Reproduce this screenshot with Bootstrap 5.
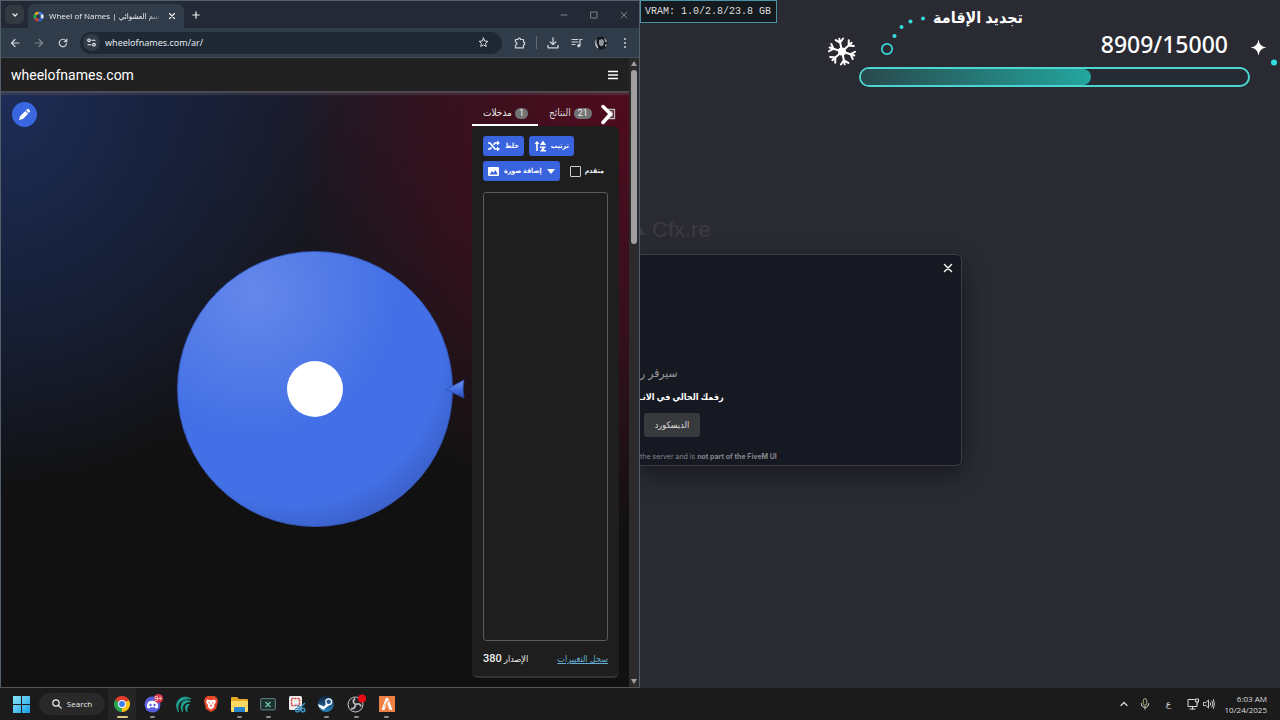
<!DOCTYPE html>
<html lang="ar">
<head>
<meta charset="utf-8">
<meta name="viewport" content="width=device-width, initial-scale=1">
<title>Wheel of Names</title>
<link href="https://cdn.jsdelivr.net/npm/bootstrap@5.3.0/dist/css/bootstrap.min.css" rel="stylesheet">
<style>
body{background:#1c1c1c;color:#eee;font-family:Roboto,"DejaVu Sans Condensed","DejaVu Sans",sans-serif;font-size:9px;line-height:12px}
svg{display:block;flex:none}
button{color:inherit}
.desktop{min-height:100vh}
.bare{background:none;border:0;padding:0}
.ln{fill:none;stroke:currentColor;stroke-linecap:round;stroke-linejoin:round}
/* browser window */
.browser{background:#232a36;border:1px solid #53606c;border-bottom-color:#555}
.strip{height:27px;padding-left:4px;font-family:"Open Sans","DejaVu Sans Condensed","DejaVu Sans",sans-serif}
.tablist-btn{width:19px;height:19px;border-radius:6px;background:#343a42}
.btab{width:156px;height:24px;background:#303c4a;border-radius:7px 7px 0 0;padding:0 8px 0 5px;gap:5px}
.tabtitle{font-size:8px;height:14px;line-height:14px;white-space:nowrap;-webkit-mask-image:linear-gradient(90deg,#000 85%,transparent);mask-image:linear-gradient(90deg,#000 85%,transparent)}
.wbtn{width:30px;height:24px;color:#7b828c}
.bar{height:30px;background:#303c4a;padding:0 2px;border-bottom:1px solid #444b55}
.tool{width:24px;height:24px;color:#c9d3de}
.omni{height:22px;border-radius:11px;background:#1d2834;margin:0 6px 0 5px;padding:0 9px 0 3px}
.site{width:17px;height:17px;border-radius:50%;background:#303c4a}
.omni input{background:none;border:0;outline:0;color:#e3e8ee;font:9px "Noto Sans",sans-serif;padding:0 0 0 5px;min-width:0}
.sitehead{height:33px;background:#212121;padding:0 11px 0 10px}
.sitehead a{font-size:14px;line-height:20px;color:#fff;text-decoration:none}
.stage{background:linear-gradient(#54505a,transparent 5px),radial-gradient(ellipse 330px 400px at 0 0,#1e2d57 0,rgba(24,38,72,.75) 45%,transparent),radial-gradient(ellipse 340px 440px at 100% 0,#500b1e 0,rgba(66,13,25,.7) 55%,transparent),linear-gradient(#1a1a28,#111 68%)}
.edit{width:25px;height:25px;left:11px;top:11px;background:#3a66e0}
.wheel{width:276px;height:276px;border:1px solid #3557b8;background:radial-gradient(circle at 28% 15%,#6487ea 0,#587fe8 18%,transparent 46%),radial-gradient(circle at 42% 38%,#4370e6 0,#4370e6 64%,#3759bd 82%)}
.hub{width:56px;height:56px;background:#fff}
.pointer{margin-left:-8px;margin-right:7px}
.side{width:147px;margin:11px 10px 9px 0}
.side .nav-link{color:#ddd;font-size:10px;line-height:14px;padding:4px 10px 4px 11px;border-bottom:2px solid transparent;border-radius:0;gap:3px}
.side .nav-link.active{border-color:#fff;color:#eee}
.pill{background:#737373;color:#eee;border-radius:6px;font-size:9px;line-height:11px;padding:0 4px}
.entries{background:#1e1e1e;border-bottom:2px solid #333;border-radius:6px;padding:10px 11px}
.acts{gap:5px;margin-bottom:5px}
.act{background:#3a63de;color:#fff;border:0;border-radius:3px;height:20px;font-size:7px;line-height:10px;font-weight:700;white-space:nowrap;padding:0 5px;gap:5px;display:flex;align-items:center}
.entries .form-check-input{width:11px;height:11px;margin:0 0 0 10px;border:1px solid #ccc;border-radius:1px;background:#1e1e1e}
.chk{font-size:7px;line-height:10px;font-weight:700;margin-left:4px}
.entries textarea{background:#1e1e1e;border:1px solid #5a5a5a;border-radius:3px;resize:none;outline:0;margin-top:11px;min-height:120px;color:#fff}
.foot{font-size:9px;line-height:14px;margin-top:11px}
.foot b{font-size:11px;font-weight:500}
.foot a{color:#64aed4}
.scrollcol{width:10px;background:#2b2b2c;padding:3px 0;color:#a0a0a0}
.thumb{width:6px;height:28%;background:#9f9f9f;border-radius:3px}
/* game window */
.game{background:#2a2a33;overflow:hidden}
.vram{border:1px solid #4c93a6;background:#151a1e;color:#ddd;font:10px/21px "Liberation Mono",monospace;padding:1px 5px 0 4px;line-height:20px;white-space:pre}
.goal{width:460px;padding:6px 30px 0 0}
.goal h2{font-size:16px;line-height:24px;font-weight:700;margin:0 227px 0 0;color:#fff}
.count{font-family:"Noto Sans",sans-serif;font-size:23px;font-weight:500;line-height:28px;margin:0 22px 9px 0;color:#fff}
.goal .progress{width:391px;height:20px;border:2px solid #4bd6d2;border-radius:10px;background:#262a33}
.goal .progress-bar{border-radius:0 9px 9px 0;background:linear-gradient(90deg,#29484c,#23a69e)}
.decor{right:0;top:0}
.ghost{font-family:"Liberation Sans",sans-serif;font-size:22px;line-height:28px;color:#3a3a41;margin:129px 0 10px;gap:6px}
.notice{width:50.3%;height:212px;background:#161822;border:1px solid #3b3e45;border-left:0;border-radius:0 6px 6px 0;box-shadow:0 8px 24px rgba(0,0,0,.45)}
.notice p{margin:0;white-space:nowrap}
.close-x{top:8px;right:8px;width:10px;height:10px}
.notice .l1{font-size:12px;line-height:16px;color:#999;margin-bottom:8px}
.l2{font-size:9px;line-height:16px;font-weight:700;color:#fff}
.dc{background:#38393c;color:#ddd;border-radius:3px;width:56px;height:24px;font-size:9px;margin:8px 4px 0}
.notice .l3{font-family:Inter,sans-serif;font-size:7px;line-height:10px;color:#85878c;margin:15px 0 3px}
/* taskbar */
.taskbar{height:32px;background:#1b1b1b;padding:0 13px;font-family:"Open Sans","DejaVu Sans",sans-serif}
.search{width:66px;height:22px;border-radius:11px;background:#292929;font-size:8px;margin:0 3px 0 9px;gap:5px}
.apps{width:293px}
.app{height:32px}
.app::after{content:"";position:absolute;bottom:2px;width:5px;height:2px;border-radius:1px;background:#8b8b8b}
.app.idle::after{display:none}
.app.on{background:#252525;border-radius:3px}
.app.on::after{width:11px;background:#d8c98a}
.tray{color:#ddd;gap:12px}
.clock{font-size:8px;line-height:11px;width:40px;white-space:nowrap}
</style>
</head>
<body>
<div class="desktop d-flex flex-column">
<div class="d-flex flex-grow-1">

<main class="browser w-50 d-flex flex-column" aria-label="Browser">
  <div class="strip d-flex align-items-center">
    <button class="bare tablist-btn d-flex align-items-center justify-content-center" aria-label="Tabs"><svg width="8" height="8" viewBox="0 0 8 8"><path class="ln" d="M2 3l2 2 2-2" stroke-width="1.3"/></svg></button>
    <div class="btab ms-1 d-flex align-items-center align-self-end">
      <svg width="11" height="11" viewBox="0 0 12 12" fill="none" stroke-width="3"><path d="M6 2A4 4 0 0 1 9.5 4" stroke="#3c7bea"/><path d="M9.5 4A4 4 0 0 1 9.500 8" stroke="#dfe6f2"/><path d="M9.500 8A4 4 0 0 1 6 10" stroke="#2864d8"/><path d="M6 10A4 4 0 0 1 2.500 8" stroke="#d93a35"/><path d="M2.500 8A4 4 0 0 1 2.500 4" stroke="#1fa656"/><path d="M2.500 4A4 4 0 0 1 6 2" stroke="#eda72f"/></svg>
      <div class="tabtitle flex-grow-1">Wheel of Names | <bdi>سم العشوائي</bdi></div>
      <button class="bare" aria-label="Close tab"><svg width="8" height="8" viewBox="0 0 8 8"><path class="ln" d="M1.500 1.500l5 5m0-5l-5 5" stroke-width="1.200"/></svg></button>
    </div>
    <button class="bare ms-2" aria-label="New tab"><svg width="8" height="8" viewBox="0 0 8 8"><path class="ln" d="M4 .8v6.400M.8 4h6.400" stroke-width="1.200"/></svg></button>
    <div class="d-flex ms-auto">
      <button class="bare wbtn d-flex align-items-center justify-content-center" aria-label="Minimize"><svg width="8" height="8" viewBox="0 0 8 8"><path class="ln" d="M1 4h6"/></svg></button>
      <button class="bare wbtn d-flex align-items-center justify-content-center" aria-label="Maximize"><svg width="8" height="8" viewBox="0 0 8 8"><path class="ln" d="M1 1h6v6H1z"/></svg></button>
      <button class="bare wbtn d-flex align-items-center justify-content-center" aria-label="Close"><svg width="8" height="8" viewBox="0 0 8 8"><path class="ln" d="M1 1l6 6m0-6L1 7"/></svg></button>
    </div>
  </div>

  <div class="bar d-flex align-items-center">
    <button class="bare tool d-flex align-items-center justify-content-center" aria-label="Back"><svg width="10" height="10" viewBox="0 0 10 10"><path class="ln" d="M9 5H1.500M5 1.500L1.500 5 5 8.500" stroke-width="1.200"/></svg></button>
    <button class="bare tool opacity-50 d-flex align-items-center justify-content-center" aria-label="Forward"><svg width="10" height="10" viewBox="0 0 10 10"><path class="ln" d="M1 5h7.500M5 1.500L8.500 5 5 8.500" stroke-width="1.200"/></svg></button>
    <button class="bare tool d-flex align-items-center justify-content-center" aria-label="Reload"><svg width="10" height="10" viewBox="0 0 10 10"><path class="ln" d="M8.600 5.500A3.700 3.700 0 1 1 7.800 2.600L8.800 3.600M8.800 1v2.600H6.200" stroke-width="1.200"/></svg></button>
    <div class="omni d-flex align-items-center flex-grow-1">
      <span class="site d-flex align-items-center justify-content-center"><svg width="9" height="9" viewBox="0 0 9 9"><g class="ln" stroke-width="1.100"><circle cx="2" cy="2.300" r="1.300"/><path d="M5 2.300h3M1 6.700h3"/><circle cx="7" cy="6.700" r="1.300"/></g></svg></span>
      <input class="flex-grow-1" type="text" value="wheelofnames.com/ar/" aria-label="Address">
      <button class="bare me-1" aria-label="Bookmark"><svg width="11" height="11" viewBox="0 0 12 12"><path class="ln" d="M6 1.200l1.400 3.200 3.400.3-2.600 2.300.8 3.400L6 8.600l-3 1.800.8-3.400L1.200 4.700l3.400-.3z"/></svg></button>
    </div>
    <button class="bare tool d-flex align-items-center justify-content-center" aria-label="Extensions"><svg width="12" height="12" viewBox="0 0 12 12"><path class="ln" d="M1.500 2.500h2.500a1.300 1.300 0 0 1 2.600 0h2.900v2.700a1.300 1.300 0 0 1 0 2.600v3h-8V8a1.500 1.500 0 0 0 0-3z" stroke-width="1.200"/></svg></button>
    <span class="vr mx-1 my-2 opacity-25"></span>
    <button class="bare tool d-flex align-items-center justify-content-center" aria-label="Downloads"><svg width="12" height="12" viewBox="0 0 12 12"><path class="ln" d="M6 1v6.500M3.300 5L6 7.600 8.700 5M1 8.500v2.300h10V8.500" stroke-width="1.300"/></svg></button>
    <button class="bare tool d-flex align-items-center justify-content-center" aria-label="Media"><svg width="12" height="12" viewBox="0 0 12 12"><path class="ln" d="M1 2.500h6M1 5h6M1 7.500h3M9 8.500V2.500h2" stroke-width="1.200"/><circle cx="7.800" cy="8.700" r="1.600" fill="currentColor"/></svg></button>
    <button class="bare tool d-flex align-items-center justify-content-center" aria-label="Profile"><svg width="14" height="14" viewBox="0 0 14 14"><circle cx="7" cy="7" r="6.500" fill="#15191d"/><path d="M2.500 2.500a6.500 6.500 0 0 0-.5 8L3.500 9 2.700 6zM10 1.500q3 2 3.200 5L11 6zM5 4l3-1 2 2-.5 4L7 10.500 5 8.500z" fill="#8f979c"/><path d="M1 8l2 4 1.500.5-1-3zM11 9l2-1-1.500 3z" fill="#dde"/></svg></button>
    <button class="bare tool d-flex align-items-center justify-content-center" aria-label="Menu"><svg width="4" height="12" viewBox="0 0 4 12" fill="currentColor"><circle cx="2" cy="2" r="1"/><circle cx="2" cy="6" r="1"/><circle cx="2" cy="10" r="1"/></svg></button>
  </div>

  <div class="d-flex flex-grow-1">
    <div class="d-flex flex-column flex-grow-1">
      <header class="sitehead d-flex align-items-center justify-content-between">
        <a href="#">wheelofnames.com</a>
        <button class="bare" aria-label="Site menu"><svg width="10" height="10" viewBox="0 0 10 10"><path d="M0 1.500h10M0 5h10M0 8.500h10" stroke="#fff" stroke-width="1.600"/></svg></button>
      </header>
      <div class="stage position-relative d-flex flex-grow-1">
        <button class="bare edit rounded-circle position-absolute d-flex align-items-center justify-content-center" aria-label="Edit"><svg width="13" height="13" viewBox="0 0 13 13" fill="#fff"><path d="M1 12l1-3.800L7.300 3l2.800 2.800L4.900 11zM8 2.300l1-1a1.300 1.300 0 0 1 1.800 0l1 1a1.300 1.300 0 0 1 0 1.800l-1 1z"/></svg></button>
        <div class="flex-grow-1 d-flex align-items-center justify-content-end">
          <div class="wheel rounded-circle d-flex align-items-center justify-content-center"><div class="hub rounded-circle"></div></div>
          <svg class="pointer position-relative" width="20" height="20" viewBox="0 0 20 20"><defs><linearGradient id="pg" x2="0" y2="1"><stop stop-color="#7298ee"/><stop offset=".6" stop-color="#3f69df"/><stop offset="1" stop-color="#2c4ca5"/></linearGradient></defs><path d="M1 10.500L19 1q-2 9 0 18z" fill="url(#pg)" stroke="#2d50b4" stroke-width=".8"/></svg>
        </div>
        <section class="side d-flex flex-column">
          <div class="position-relative">
            <ul class="nav flex-nowrap">
              <li class="nav-item"><a href="#" class="nav-link active d-flex align-items-center"><span>مدخلات</span><span class="pill">1</span></a></li>
              <li class="nav-item"><a href="#" class="nav-link d-flex align-items-center"><span>النتائج</span><span class="pill">21</span></a></li>
            </ul>
            <svg class="position-absolute end-0 top-0" width="18" height="24" viewBox="0 0 18 24"><path d="M4 7.500h9.500v9H4M8 10h3v4H8" fill="none" stroke="#bbb" stroke-width="1.300"/><path d="M2 4.500L9.500 12 2 20.500" fill="none" stroke="#fff" stroke-width="3.500" stroke-linecap="round"/></svg>
          </div>
          <div class="entries flex-grow-1 d-flex flex-column">
            <div class="acts d-flex">
              <button class="act"><svg width="12" height="12" viewBox="0 0 12 12"><path d="M0 3h2l5 6h3M0 9h2l1.500-1.700M5.500 4.700L7 3h3" fill="none" stroke="#fff" stroke-width="1.700"/><path d="M9 .5L12 3 9 5.500zM9 6.500L12 9 9 11.500z" fill="#fff"/></svg><span>خلط</span></button>
              <button class="act"><svg width="12" height="12" viewBox="0 0 12 12" fill="#fff"><path d="M2.200 11V4H.5L3 1l2.500 3H3.800v7zM6 5l3-4.500L12 5zM6 6.500h6L9.500 10H12v1.500H6L8.500 8H6z"/></svg><span>ترتيب</span></button>
            </div>
            <div class="d-flex align-items-center">
              <button class="act"><svg width="11" height="11" viewBox="0 0 11 11"><rect y="1" width="11" height="9" rx="1" fill="#fff"/><path d="M1.500 8.500L4 5l1.500 1.700L7.500 4l2.200 4.500z" fill="#3a63de"/></svg><span>إضافة صورة</span><svg width="8" height="5" viewBox="0 0 8 5"><path d="M0 0h8L4 5z" fill="#fff"/></svg></button>
              <input class="form-check-input" type="checkbox" id="adv"><label class="chk" for="adv">متقدم</label>
            </div>
            <textarea class="flex-grow-1 w-100" aria-label="Entries"></textarea>
            <div class="foot d-flex justify-content-between"><span><b>380</b> <bdi>الإصدار</bdi></span><a href="#">سجل التغييرات</a></div>
          </div>
        </section>
      </div>
    </div>
    <div class="scrollcol d-flex flex-column align-items-center">
      <svg class="mb-1" width="6" height="5" viewBox="0 0 6 5"><path d="M3 0l3 5H0z" fill="currentColor"/></svg>
      <div class="thumb"></div>
      <svg class="mt-auto" width="6" height="5" viewBox="0 0 6 5"><path d="M3 5l3-5H0z" fill="currentColor"/></svg>
    </div>
  </div>
</main>

<aside class="game w-50" aria-label="Game">
  <div class="d-flex justify-content-between align-items-start position-relative">
    <div class="vram">VRAM: 1.0/2.8/23.8 GB</div>
    <div class="goal d-flex flex-column align-items-end flex-shrink-0">
      <h2 dir="rtl">تجديد الإقامة</h2>
      <div class="count">8909/15000</div>
      <div class="progress" role="progressbar" aria-label="Goal" aria-valuenow="8909" aria-valuemin="0" aria-valuemax="15000"><div class="progress-bar" style="width:59.4%"></div></div>
    </div>
    <svg class="decor position-absolute" width="460" height="100" viewBox="820 0 460 100">
      <defs><g id="arm"><path d="M0 0V-13M-3.800-12.500L0-9 3.800-12.500" fill="none" stroke="#fff" stroke-width="2" stroke-linecap="round"/></g></defs>
      <g transform="translate(842 51.500) rotate(-12)"><circle r="4" fill="#fff"/><use href="#arm"/><use href="#arm" transform="rotate(60)"/><use href="#arm" transform="rotate(120)"/><use href="#arm" transform="rotate(180)"/><use href="#arm" transform="rotate(240)"/><use href="#arm" transform="rotate(300)"/></g>
      <circle cx="887" cy="49" r="5.200" fill="none" stroke="#35dede" stroke-width="1.700"/>
      <g fill="#35dede"><circle cx="894.500" cy="36" r="2"/><circle cx="901.500" cy="27" r="2"/><circle cx="910.500" cy="21.500" r="2"/><circle cx="923" cy="18.500" r="2"/><circle cx="1274" cy="62.500" r="3"/></g>
      <path d="M1258.500 39.500q.8 7.200 8 8-7.200.8-8 8-.8-7.200-8-8 7.200-.8 8-8z" fill="#fff"/>
    </svg>
  </div>
  <div class="ghost d-flex align-items-center"><svg width="6" height="12" viewBox="0 0 6 12"><path d="M0 2l5 9H0z" fill="currentColor"/></svg><span>Cfx.re</span></div>
  <div class="notice position-relative d-flex flex-column align-items-start justify-content-end">
    <button class="bare close-x position-absolute" aria-label="Close dialog"><svg width="10" height="10" viewBox="0 0 10 10"><path class="ln" d="M1.500 1.500l7 7m0-7l-7 7" stroke-width="1.500"/></svg></button>
    <p class="l1" dir="rtl">سيرفر ر</p>
    <p class="l2" dir="rtl">رقمك الحالي في الانـ</p>
    <button class="bare dc">الديسكورد</button>
    <p class="l3">the server and is <b>not part of the FiveM UI</b></p>
  </div>
</aside>
</div>

<footer class="taskbar d-flex align-items-center">
  <button class="bare" aria-label="Start"><svg width="17" height="17" viewBox="0 0 17 17"><defs><linearGradient id="wg" x2="1" y2="1"><stop stop-color="#8be4fc"/><stop offset="1" stop-color="#1aa0e8"/></linearGradient></defs><path d="M0 0h8v8H0zM9 0h8v8H9zM0 9h8v8H0zM9 9h8v8H9z" fill="url(#wg)"/></svg></button>
  <button class="bare search d-flex align-items-center justify-content-center"><svg width="10" height="10" viewBox="0 0 10 10"><path class="ln" d="M6.400 6.400L9.200 9.200M7.200 4a3.200 3.200 0 1 1-6.400 0 3.200 3.200 0 0 1 6.400 0z" stroke-width="1.200"/></svg>Search</button>
  <nav class="apps d-flex h-100" aria-label="Apps">
    <button class="bare app on flex-fill position-relative d-flex align-items-center justify-content-center" aria-label="Chrome"><svg width="16" height="16" viewBox="0 0 16 16"><path d="M8 8L1.070 4A8 8 0 0 1 14.930 4z" fill="#e33b2e"/><path d="M8 8L14.930 4A8 8 0 0 1 8 16z" fill="#fbc116"/><path d="M8 8v8A8 8 0 0 1 1.070 4z" fill="#2da44e"/><circle cx="8" cy="8" r="4" fill="#fff"/><circle cx="8" cy="8" r="3" fill="#3b7ded"/></svg></button>
    <button class="bare app flex-fill position-relative d-flex align-items-center justify-content-center" aria-label="Discord"><svg width="20" height="20" viewBox="0 0 20 20"><circle cx="9.500" cy="10.500" r="8" fill="#5a5fe0"/><path d="M5 8q4.500-2.500 9 0 1.500 3 1 5.500-1 1-2.500 1l-.7-1.200H7.200l-.7 1.200Q5 14.500 4 13.500 3.500 11 5 8z" fill="#fff"/><circle cx="7.500" cy="11" r="1.200" fill="#5a5fe0"/><circle cx="11.500" cy="11" r="1.200" fill="#5a5fe0"/><circle cx="15.500" cy="4.500" r="4.500" fill="#d9374a"/><text x="15.300" y="7" font-size="7" text-anchor="middle" fill="#fff">9+</text></svg></button>
    <button class="bare app idle flex-fill position-relative d-flex align-items-center justify-content-center" aria-label="Wing"><svg width="17" height="17" viewBox="0 0 17 17" fill="#20a394"><path d="M16 3Q10-1 4.500 3-1 8 3.500 16 1.500 9 5.500 5.500 9.500 2 16 3zM15.500 5.500Q10 3 7 7q-2.500 4 .5 9-1-5.500 1.500-8 2.500-2.500 6.500-2.500zM14.500 8.500q-3-.8-4 1.500-1 3 1.500 6-.3-3.500.5-5 .7-1.700 2-2.500z" stroke="#20a394" stroke-width=".7"/></svg></button>
    <button class="bare app idle flex-fill position-relative d-flex align-items-center justify-content-center" aria-label="Brave"><svg width="14" height="16" viewBox="0 0 14 16"><path d="M3.500 0h7L13 2l1 3-2 8-5 3-5-3L0 5l1-3z" fill="#ea4a2a"/><path d="M3 3.500l4 .8 4-.8 1 2.500-2 3 .3 2L7 13.500 3.700 11 4 9 2 6z" fill="#fff"/><path d="M4 6l2 .8L5.500 8zM10 6l-2 .8.5 1.200zM6 10l1-2 1 2-1 1z" fill="#ea4a2a"/></svg></button>
    <button class="bare app flex-fill position-relative d-flex align-items-center justify-content-center" aria-label="Files"><svg width="17" height="15" viewBox="0 0 17 15"><path d="M0 1q0-1 1-1h5l2 2h8q1 0 1 1v11H0z" fill="#e5a926"/><path d="M0 4h17v10q0 1-1 1H1q-1 0-1-1z" fill="#fbd965"/><path d="M3 15v-4q0-1 1-1h9q1 0 1 1v4z" fill="#2685cd"/></svg></button>
    <button class="bare app flex-fill position-relative d-flex align-items-center justify-content-center" aria-label="Monitor"><svg width="16" height="13" viewBox="0 0 16 13"><rect x=".6" y=".6" width="14.800" height="11.300" rx="1" fill="#1c3230" stroke="#62827e"/><path d="M5.500 4l5 5m0-5l-5 5" stroke="#76c5b0" stroke-width="1.200"/></svg></button>
    <button class="bare app idle flex-fill position-relative d-flex align-items-center justify-content-center" aria-label="Snipping tool"><svg width="17" height="17" viewBox="0 0 17 17"><rect width="13" height="14" rx="1.500" fill="#eee"/><rect x="2.500" y="2.500" width="8" height="7" fill="none" stroke="#d43b36" stroke-width="1.400" stroke-dasharray="2 1"/><g fill="none" stroke="#3f91bf" stroke-width="1.600"><path d="M16 7l-6.500 6M8 9l5 4"/><circle cx="8.500" cy="14" r="1.800"/><circle cx="14" cy="14" r="1.800"/></g></svg></button>
    <button class="bare app flex-fill position-relative d-flex align-items-center justify-content-center" aria-label="Steam"><svg width="16" height="16" viewBox="0 0 16 16"><defs><linearGradient id="sg" x2="0" y2="1"><stop stop-color="#12243f"/><stop offset="1" stop-color="#2684bc"/></linearGradient></defs><circle cx="8" cy="8" r="8" fill="url(#sg)"/><path d="M0 8l6 2.500 3-4 2.500 2.500-4 3L5.500 14 1 11z" fill="#fff"/><circle cx="10.700" cy="5.700" r="2.900" fill="#24588c" stroke="#fff" stroke-width="1.300"/></svg></button>
    <button class="bare app flex-fill position-relative d-flex align-items-center justify-content-center" aria-label="OBS"><svg width="20" height="20" viewBox="0 0 20 20"><circle cx="9.500" cy="10.500" r="7.500" fill="#222226" stroke="#ccc"/><path d="M9 4.500Q5.500 8 9.500 10.500 14 8.500 15 12.500M9.500 10.500Q9 15.500 5 14.500" fill="none" stroke="#bbb" stroke-width="1.800"/><circle cx="16" cy="4.500" r="4" fill="#e90b13"/></svg></button>
    <button class="bare app flex-fill position-relative d-flex align-items-center justify-content-center" aria-label="FiveM"><svg width="16" height="16" viewBox="0 0 16 16"><rect width="16" height="16" fill="#ed8042"/><path d="M2.500 14L6.800 2h2.400l4.300 12h-3L8 7l-2.500 7z" fill="#fff"/><path d="M5.500 9l4-5M5 11l5-6" stroke="#ed8042" stroke-width=".7"/></svg></button>
  </nav>
  <div class="tray d-flex align-items-center ms-auto">
    <button class="bare" aria-label="Hidden icons"><svg width="8" height="8" viewBox="0 0 8 8"><path class="ln" d="M1 5.500l3-3 3 3" stroke-width="1.200"/></svg></button>
    <svg width="10" height="12" viewBox="0 0 10 12"><rect x="3.300" y=".7" width="3.400" height="6.500" rx="1.700" fill="none" stroke="#b5ad78"/><path class="ln" d="M1.300 5.500a3.700 3.700 0 0 0 7.400 0M5 9.200v2" stroke="#b5ad78"/></svg>
    <span class="px-1">ع</span>
    <div class="d-flex gap-1">
    <svg width="12" height="12" viewBox="0 0 12 12"><path class="ln" d="M7.500 1.500H1v7h9V6M3 11h5M5.500 8.500V11M9 1h2.500v3H9zM10.200 4v2"/></svg>
    <svg width="12" height="12" viewBox="0 0 12 12"><path class="ln" d="M.8 4.500h2L5.500 2v8L2.800 7.500h-2zM7.300 4.500q1.200 1.500 0 3M9 3q2.300 3 0 6M10.500 1.500q2 4.500 0 9" stroke-width=".9"/></svg>
    </div>
    <div class="clock d-flex flex-column align-items-end"><span>6:03 AM</span><span>10/24/2025</span></div>
  </div>
</footer>
</div>
<script src="https://cdn.jsdelivr.net/npm/bootstrap@5.3.0/dist/js/bootstrap.bundle.min.js"></script>
</body>
</html>
